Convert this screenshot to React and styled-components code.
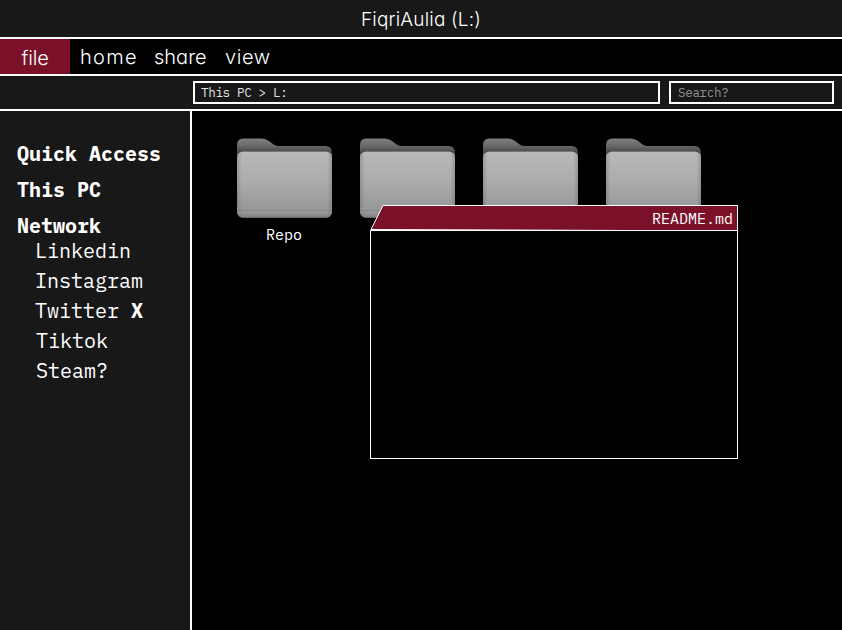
import React from "react";
import styled, { createGlobalStyle, css } from "styled-components";

const Global = createGlobalStyle`
  * { box-sizing: border-box; }
  body { margin: 0; background: #000; color: #fff; overflow: hidden; }
`;

const mono = css`font-family: "IBM Plex Mono", "Liberation Mono", monospace;`;
const geometric = css`
  font-family: "Inter", sans-serif;
  font-weight: 300;
  font-feature-settings: "cv11" 1;
`;

const Explorer = styled.div`
  width: 842px;
  height: 630px;
  display: flex;
  flex-direction: column;
  background: #000;
`;

const TitleBar = styled.header`
  ${geometric}
  height: 39px;
  flex: none;
  display: flex;
  justify-content: center;
  background: #181818;
  border-bottom: 2px solid #fff;
  font-size: 19px;
  line-height: 39px;
  letter-spacing: 0.17px;
`;

const MenuBar = styled.nav`
  ${geometric}
  height: 37px;
  flex: none;
  display: flex;
  border-bottom: 2px solid #fff;
  font-size: 20px;
  line-height: 36px;
`;

const MenuItem = styled.span`
  width: ${(p) => p.$width}px;
  padding-left: ${(p) => p.$inset}px;
  letter-spacing: ${(p) => p.$track || 0}px;
  white-space: nowrap;
  ${(p) => p.$active && css`
    background: #7b1129;
    line-height: 38px;
    height: 35px;
  `}
`;

const Toolbar = styled.div`
  height: 35px;
  flex: none;
  display: flex;
  gap: 9px;
  padding: 5px 8px 5px 193px;
  background: #181818;
  border-bottom: 2px solid #fff;
`;

const Field = styled.div`
  ${mono}
  height: 23px;
  width: ${(p) => p.$width}px;
  padding-left: ${(p) => p.$inset}px;
  border: 2px solid #fff;
  font-size: 12.6px;
  letter-spacing: -0.36px;
  line-height: 19px;
  color: ${(p) => (p.$muted ? "#8f8f8f" : "#e4e4e4")};
`;

const Body = styled.div`
  flex: 1;
  min-height: 0;
  display: flex;
`;

const Sidebar = styled.aside`
  ${mono}
  width: 192px;
  flex: none;
  padding: 25px 0 0 17px;
  background: #181818;
  border-right: 2px solid #fff;
  font-size: 20px;
`;

const Section = styled.div`
  height: 36px;
  line-height: 36px;
  font-weight: 700;
`;

const Links = styled.div`
  margin-top: -8px;
  padding-left: 18px;
`;

const Link = styled.div`
  height: 30px;
  line-height: 30px;
  padding-left: ${(p) => p.$inset || 0}px;
`;

const Files = styled.main`
  position: relative;
  flex: 1;
  display: flex;
  align-items: flex-start;
  gap: 28px;
  padding: 27px 0 0 45px;
`;

const FolderItem = styled.div`
  ${mono}
  width: 95px;
  display: flex;
  flex-direction: column;
  align-items: center;
  font-size: 15px;
  line-height: 18px;
`;

const FolderDrawing = styled.svg`
  display: block;
  width: 95px;
  height: 80px;
`;

const FolderName = styled.span`
  margin-top: 8px;
  padding-right: 1px;
`;

const NoteWindow = styled.section`
  position: absolute;
  left: 178px;
  top: 94px;
  width: 368px;
  height: 254px;
`;

const NoteTitle = styled.div`
  ${mono}
  position: relative;
  height: 26px;
  padding-right: 5px;
  text-align: right;
  font-size: 15px;
  line-height: 27px;
`;

const NoteShape = styled.svg`
  position: absolute;
  inset: 0;
  width: 368px;
  height: 26px;
`;

const NoteName = styled.span`
  position: relative;
`;

const NoteBody = styled.div`
  height: 228px;
  background: #000;
  border: 1px solid #fff;
  border-top: 0;
`;

function Folder({ name }) {
  return (
    <FolderItem>
      <FolderDrawing viewBox="0 0 95 80">
        <defs>
          <linearGradient id="back" x1="0" y1="0" x2="0" y2="18" gradientUnits="userSpaceOnUse">
            <stop offset="0" stopColor="#808080" />
            <stop offset=".4" stopColor="#6c6c6c" />
            <stop offset=".8" stopColor="#484848" />
          </linearGradient>
          <linearGradient id="front" x1="0" y1="0" x2="0" y2="1">
            <stop offset="0" stopColor="#b8baba" />
            <stop offset=".45" stopColor="#abadad" />
            <stop offset=".85" stopColor="#96989a" />
            <stop offset="1" stopColor="#858789" />
          </linearGradient>
          <linearGradient id="edge" x1="0" y1="0" x2="1" y2="0">
            <stop offset="0" stopColor="#555" stopOpacity=".3" />
            <stop offset=".05" stopColor="#555" stopOpacity="0" />
            <stop offset=".95" stopColor="#555" stopOpacity="0" />
            <stop offset="1" stopColor="#555" stopOpacity=".3" />
          </linearGradient>
        </defs>
        <path fill="url(#back)" d="M0 24V7Q0 .5 6.500 .5H25Q29 .5 32 3L37 6.700Q39 8 42 8H88.500Q95 8 95 15V24Z" />
        <rect y="13.700" width="95" height="66" rx="5.500" fill="url(#front)" />
        <rect y="13.700" width="95" height="66" rx="5.500" fill="url(#edge)" />
        <path d="M5 14.200H90" stroke="#c0c2c2" strokeWidth=".5" />
        <path d="M.5 70.500H94.500M.5 74.500H94.500" stroke="#a4a6a8" strokeWidth=".5" />
        <path d="M.5 71.500H94.500" stroke="#828486" strokeWidth=".5" />
        <path d="M5 79.200H90" stroke="#6c6e70" strokeWidth=".8" />
      </FolderDrawing>
      {name && <FolderName>{name}</FolderName>}
    </FolderItem>
  );
}

export default function App() {
  return (
    <>
      <Global />
      <Explorer>
        <TitleBar>FiqriAulia (L:)</TitleBar>
        <MenuBar>
          <MenuItem $active $width={70} $inset={21.5} $track={-0.2}>file</MenuItem>
          <MenuItem $width={73} $inset={10} $track={1.3}>home</MenuItem>
          <MenuItem $width={72} $inset={11}>share</MenuItem>
          <MenuItem $width={80} $inset={10} $track={0.6}>view</MenuItem>
        </MenuBar>
        <Toolbar>
          <Field $width={467} $inset={6}>This PC &gt; L:</Field>
          <Field $width={165} $inset={7} $muted>Search?</Field>
        </Toolbar>
        <Body>
          <Sidebar>
            <Section>Quick Access</Section>
            <Section>This PC</Section>
            <Section>Network</Section>
            <Links>
              <Link>Linkedin</Link>
              <Link>Instagram</Link>
              <Link>Twitter <b>X</b></Link>
              <Link $inset={1}>Tiktok</Link>
              <Link $inset={1}>Steam?</Link>
            </Links>
          </Sidebar>
          <Files>
            <Folder name="Repo" />
            <Folder />
            <Folder />
            <Folder />
            <NoteWindow>
              <NoteTitle>
                <NoteShape viewBox="0 0 368 26">
                  <path d="M13 .5H367.500V25.500H.5Z" fill="#7b1129" stroke="#fff" />
                  <path d="M1 24L320 25.200H1Z" fill="#fff" />
                </NoteShape>
                <NoteName>README.md</NoteName>
              </NoteTitle>
              <NoteBody />
            </NoteWindow>
          </Files>
        </Body>
      </Explorer>
    </>
  );
}
